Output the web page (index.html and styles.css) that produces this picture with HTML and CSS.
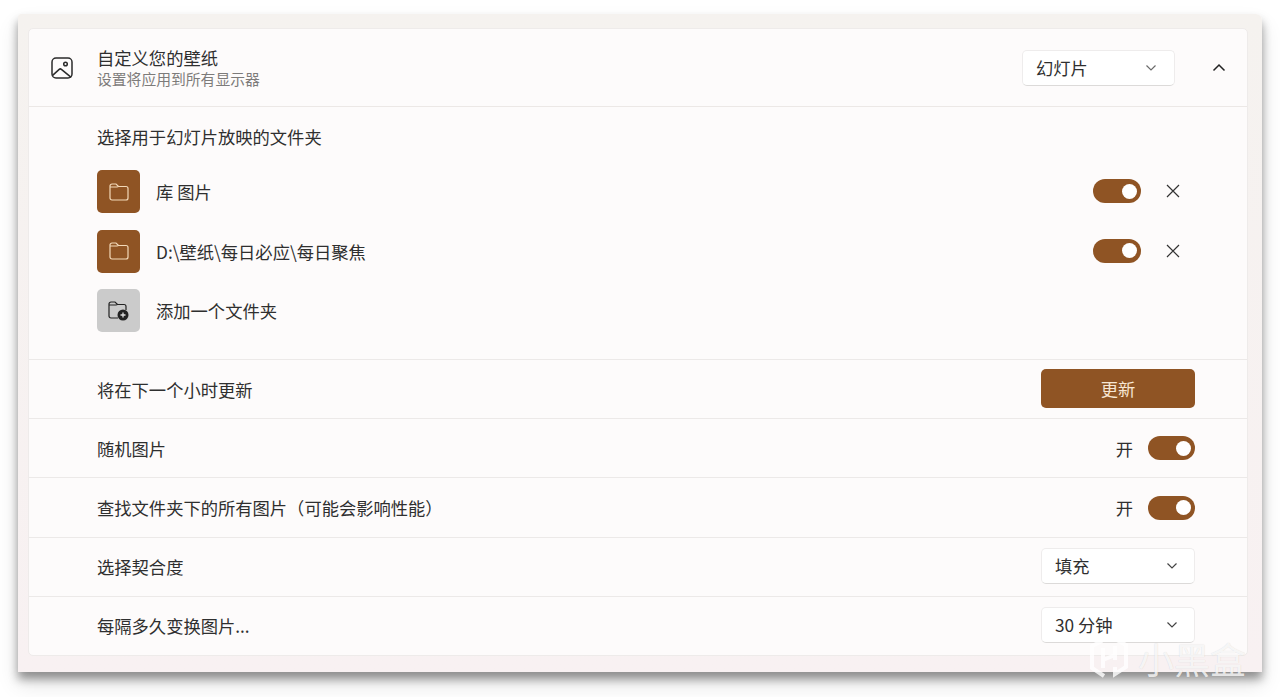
FILE: index.html
```html
<!DOCTYPE html>
<html lang="zh-CN">
<head>
  <meta charset="UTF-8">
  <meta name="viewport" content="width=device-width, initial-scale=1.0">
  <title>自定义您的壁纸</title>
  <link rel="stylesheet" href="styles.css">
</head>
<body>
  <div class="window">
    <div class="card">

      <div class="header">
        <svg class="header-icon" width="22" height="22" viewBox="0 0 22 22" fill="none" stroke="#2b2b2b" stroke-width="1.5">
          <rect x="1" y="1" width="20" height="20" rx="4"/>
          <circle cx="14.5" cy="7" r="1.8"/>
          <path d="M1.6 18.4 8.2 12.4a1.6 1.6 0 0 1 2.2 0l9.8 8"/>
        </svg>
        <div class="header-text">
          <div class="header-title">自定义您的壁纸</div>
          <div class="header-sub">设置将应用到所有显示器</div>
        </div>
        <div class="select select-head">
          <span>幻灯片</span>
          <svg class="chev" width="12" height="8" viewBox="0 0 12 8" fill="none" stroke="#6b6b6b" stroke-width="1.2"><path d="M1.5 1.5 6 6l4.5-4.5"/></svg>
        </div>
        <svg class="collapse" width="14" height="9" viewBox="0 0 14 9" fill="none" stroke="#222" stroke-width="1.5"><path d="M1.5 7.5 7 2l5.500 5.500"/></svg>
      </div>

      <div class="folders">
        <div class="folders-title">选择用于幻灯片放映的文件夹</div>
        <div class="folder-list">
          <div class="folder">
            <div class="tile">
              <svg width="20" height="18" viewBox="0 0 20 18" fill="none" stroke="#f3d9b8" stroke-width="1.2"><path d="M1 4V3a2 2 0 0 1 2-2h4l2.500 2.500H17a2 2 0 0 1 2 2V15a2 2 0 0 1-2 2H3a2 2 0 0 1-2-2V4h7l1.500-.5"/></svg>
            </div>
            <span class="folder-name">库 图片</span>
            <div class="toggle"></div>
            <svg class="remove" width="14" height="14" viewBox="0 0 14 14" stroke="#333" stroke-width="1.2"><path d="M1 1l12 12M13 1 1 13"/></svg>
          </div>
          <div class="folder">
            <div class="tile">
              <svg width="20" height="18" viewBox="0 0 20 18" fill="none" stroke="#f3d9b8" stroke-width="1.2"><path d="M1 4V3a2 2 0 0 1 2-2h4l2.500 2.500H17a2 2 0 0 1 2 2V15a2 2 0 0 1-2 2H3a2 2 0 0 1-2-2V4h7l1.500-.5"/></svg>
            </div>
            <span class="folder-name">D:\壁纸\每日必应\每日聚焦</span>
            <div class="toggle"></div>
            <svg class="remove" width="14" height="14" viewBox="0 0 14 14" stroke="#333" stroke-width="1.2"><path d="M1 1l12 12M13 1 1 13"/></svg>
          </div>
          <div class="folder">
            <div class="tile tile-add">
              <svg width="21" height="20" viewBox="0 0 21 20" fill="none" stroke="#222" stroke-width="1.2">
                <path d="M10 17H3a2 2 0 0 1-2-2V3a2 2 0 0 1 2-2h4l2.500 2.500H16a2 2 0 0 1 2 2V9M1 4h7l1.500-.5"/>
                <circle cx="15" cy="14" r="5.500" fill="#222" stroke="none"/>
                <path d="M12.500 14h5M15 11.500v5" stroke="#ddd" stroke-width="1.300"/>
              </svg>
            </div>
            <span class="folder-name">添加一个文件夹</span>
          </div>
        </div>
      </div>

      <div class="row">
        <span>将在下一个小时更新</span>
        <button class="update-btn">更新</button>
      </div>
      <div class="row">
        <span>随机图片</span>
        <div class="switch"><span class="switch-label">开</span><div class="toggle"></div></div>
      </div>
      <div class="row">
        <span>查找文件夹下的所有图片（可能会影响性能）</span>
        <div class="switch"><span class="switch-label">开</span><div class="toggle"></div></div>
      </div>
      <div class="row">
        <span>选择契合度</span>
        <div class="select">
          <span>填充</span>
          <svg class="chev" width="12" height="8" viewBox="0 0 12 8" fill="none" stroke="#444" stroke-width="1.2"><path d="M1.5 1.5 6 6l4.500-4.500"/></svg>
        </div>
      </div>
      <div class="row">
        <span>每隔多久变换图片...</span>
        <div class="select">
          <span>30 分钟</span>
          <svg class="chev" width="12" height="8" viewBox="0 0 12 8" fill="none" stroke="#444" stroke-width="1.2"><path d="M1.5 1.5 6 6l4.500-4.500"/></svg>
        </div>
      </div>

    </div>
  </div>

  <!-- site watermark -->
  <div class="watermark">
    <svg width="42" height="44" viewBox="0 0 42 44" fill="none" stroke="#fff" stroke-width="4" stroke-opacity=".8">
      <path d="M14 5 4 10v22l12 8"/>
      <path d="M27 3l11 6v22L27 38v-7"/>
      <path d="M15 12v20M27 10v14M15 24l12-5"/>
    </svg>
    <span>小黑盒</span>
  </div>
</body>
</html>
```

FILE: styles.css
```css
body {
  margin: 0;
  padding: 14px 18px 0;
  background: #ffffff;
  font-family: "Noto Sans CJK SC", "Noto Sans", sans-serif;
  color: #2f2f2f;
  height: 683px;
  overflow: hidden;
  position: relative;
}

.window {
  width: 1244px;
  height: 658px;
  box-sizing: border-box;
  padding: 14px 14px 16px 10px;
  background: linear-gradient(#f5f2ef, #f8f1f2);
  border-radius: 3px 6px 0 0;
  box-shadow: 0 7px 10px rgba(0, 0, 0, 0.38), 0 12px 22px rgba(0, 0, 0, 0.12);
}

.card {
  height: 628px;
  box-sizing: border-box;
  background: #fdfbfb;
  border: 1px solid #eeebea;
  border-radius: 5px;
  display: flex;
  flex-direction: column;
}

.header {
  height: 77px;
  flex: none;
  display: flex;
  align-items: center;
  padding-left: 22px;
  border-bottom: 1px solid #ece8e6;
  box-sizing: content-box;
}

.header-icon {
  flex: none;
}

.header-text {
  margin-left: 24px;
  flex: 1;
}

.header-title {
  font-size: 17.3px;
  line-height: 22px;
}

.header-sub {
  font-size: 14.8px;
  line-height: 20px;
  color: #7d7b7a;
}

.select {
  width: 154px;
  height: 36px;
  box-sizing: border-box;
  display: flex;
  align-items: center;
  justify-content: space-between;
  padding: 0 16px 0 13px;
  background: #ffffff;
  border: 1px solid #eeecec;
  border-bottom-color: #dcdad9;
  border-radius: 5px;
  font-size: 17.3px;
}

.row .select {
  margin-top: -2px;
}

.select-head {
  width: 153px;
  padding-right: 17px;
}

.collapse {
  margin: 0 21px 0 37px;
}

.folders {
  height: 252px;
  flex: none;
  box-sizing: border-box;
  padding: 18px 0 0 68px;
}

.folders-title {
  font-size: 17.3px;
  line-height: 24px;
}

.folder-list {
  margin-top: 21px;
  display: flex;
  flex-direction: column;
  gap: 16.5px;
}

.folder {
  display: flex;
  align-items: center;
  height: 43px;
  padding-right: 67px;
}

.tile {
  width: 43px;
  height: 43px;
  flex: none;
  display: flex;
  align-items: center;
  justify-content: center;
  background: #8f5424;
  border-radius: 5px;
}

.tile-add {
  background: #cbcbcb;
}

.folder-name {
  margin-left: 16px;
  font-size: 17.3px;
  flex: 1;
}

.toggle {
  width: 48px;
  height: 24px;
  flex: none;
  background: #8f5424;
  border-radius: 12px;
  display: flex;
  align-items: center;
  justify-content: flex-end;
  padding-right: 4px;
  box-sizing: border-box;
}

.toggle::after {
  content: "";
  width: 15px;
  height: 15px;
  background: #ffffff;
  border-radius: 50%;
}

.folder .toggle {
  margin-top: -1px;
}

.remove {
  margin: -1px 0 0 25px;
}

.row {
  flex: 1;
  display: flex;
  align-items: center;
  justify-content: space-between;
  padding: 0 52px 0 68px;
  border-top: 1px solid #ece9e8;
  font-size: 17.3px;
}

.update-btn {
  width: 154px;
  height: 39px;
  margin-top: -2px;
  background: #8f5424;
  color: #f7e6d3;
  border: none;
  border-radius: 5px;
  font-family: inherit;
  font-size: 17.3px;
  padding: 0;
}

.switch {
  display: flex;
  align-items: center;
}

.switch .toggle {
  width: 47px;
}

.switch-label {
  margin-right: 15px;
}

.watermark {
  position: absolute;
  left: 1088px;
  top: 636px;
  display: flex;
  align-items: center;
  gap: 8px;
  color: rgba(255, 255, 255, 0.8);
  font-size: 36px;
  line-height: 40px;
  text-shadow: 0 0 1px rgba(0, 0, 0, 0.15);
}
```
